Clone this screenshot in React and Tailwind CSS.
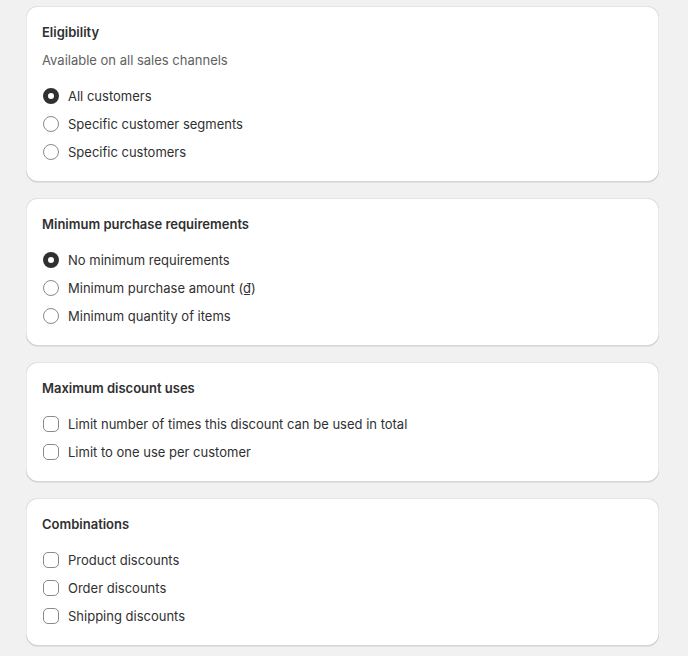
import React, { useState } from "react";

const cardCls =
  "w-[633px] bg-white rounded-xl px-4 pt-4 pb-4 shadow-[0_1px_0_0_rgba(26,26,26,0.07),inset_0_-1px_0_0_rgba(0,0,0,0.17),inset_1px_0_0_0_rgba(0,0,0,0.08),inset_-1px_0_0_0_rgba(0,0,0,0.08),inset_0_1px_0_0_rgba(204,204,204,0.5)]";

const Radio = ({ checked, label, onClick }) => (
  <div className="h-7 flex items-center cursor-pointer" onClick={onClick}>
    <div className="w-[18px] h-[18px] flex items-center justify-center">
      {checked ? (
        <span className="w-4 h-4 rounded-full border-[5px] border-[#303030] bg-white" />
      ) : (
        <span className="w-4 h-4 rounded-full border border-[#8a8a8a] bg-white" />
      )}
    </div>
    <span className="ml-2 text-[13px] leading-5 font-[420] text-[#303030]">{label}</span>
  </div>
);

const Checkbox = ({ checked, label, onClick }) => (
  <div className="h-7 flex items-center cursor-pointer" onClick={onClick}>
    <div className="w-[18px] h-[18px] flex items-center justify-center">
      <span
        className={
          checked
            ? "w-4 h-4 rounded-[5px] bg-[#303030] border border-[#303030]"
            : "w-4 h-4 rounded-[5px] border border-[#8a8a8a] bg-white"
        }
      />
    </div>
    <span className="ml-2 text-[13px] leading-5 font-[420] text-[#303030]">{label}</span>
  </div>
);

const App = () => {
  const [eligibility, setEligibility] = useState(0);
  const [minimum, setMinimum] = useState(0);
  const [uses, setUses] = useState({});
  const [combos, setCombos] = useState({});

  return (
    <div
      className="min-h-screen bg-[#f1f1f1] pl-[26px] pt-[6px] pb-4 flex flex-col gap-4"
      style={{ fontFamily: "Inter, 'Noto Sans', sans-serif" }}
    >
      <div className={cardCls}>
        <h2 className="text-[13px] leading-5 font-semibold text-[#303030]">Eligibility</h2>
        <p className="mt-2 text-[13px] leading-5 font-[420] text-[#616161]">Available on all sales channels</p>
        <div className="mt-3">
          {["All customers", "Specific customer segments", "Specific customers"].map((l, i) => (
            <Radio key={l} label={l} checked={eligibility === i} onClick={() => setEligibility(i)} />
          ))}
        </div>
      </div>

      <div className={cardCls}>
        <h2 className="text-[13px] leading-5 font-semibold text-[#303030]">Minimum purchase requirements</h2>
        <div className="mt-3">
          {["No minimum requirements", "Minimum purchase amount (₫)", "Minimum quantity of items"].map((l, i) => (
            <Radio key={l} label={l} checked={minimum === i} onClick={() => setMinimum(i)} />
          ))}
        </div>
      </div>

      <div className={cardCls}>
        <h2 className="text-[13px] leading-5 font-semibold text-[#303030]">Maximum discount uses</h2>
        <div className="mt-3">
          {["Limit number of times this discount can be used in total", "Limit to one use per customer"].map((l) => (
            <Checkbox key={l} label={l} checked={!!uses[l]} onClick={() => setUses({ ...uses, [l]: !uses[l] })} />
          ))}
        </div>
      </div>

      <div className={cardCls}>
        <h2 className="text-[13px] leading-5 font-semibold text-[#303030]">Combinations</h2>
        <div className="mt-3">
          {["Product discounts", "Order discounts", "Shipping discounts"].map((l) => (
            <Checkbox key={l} label={l} checked={!!combos[l]} onClick={() => setCombos({ ...combos, [l]: !combos[l] })} />
          ))}
        </div>
      </div>
    </div>
  );
};

export default App;
